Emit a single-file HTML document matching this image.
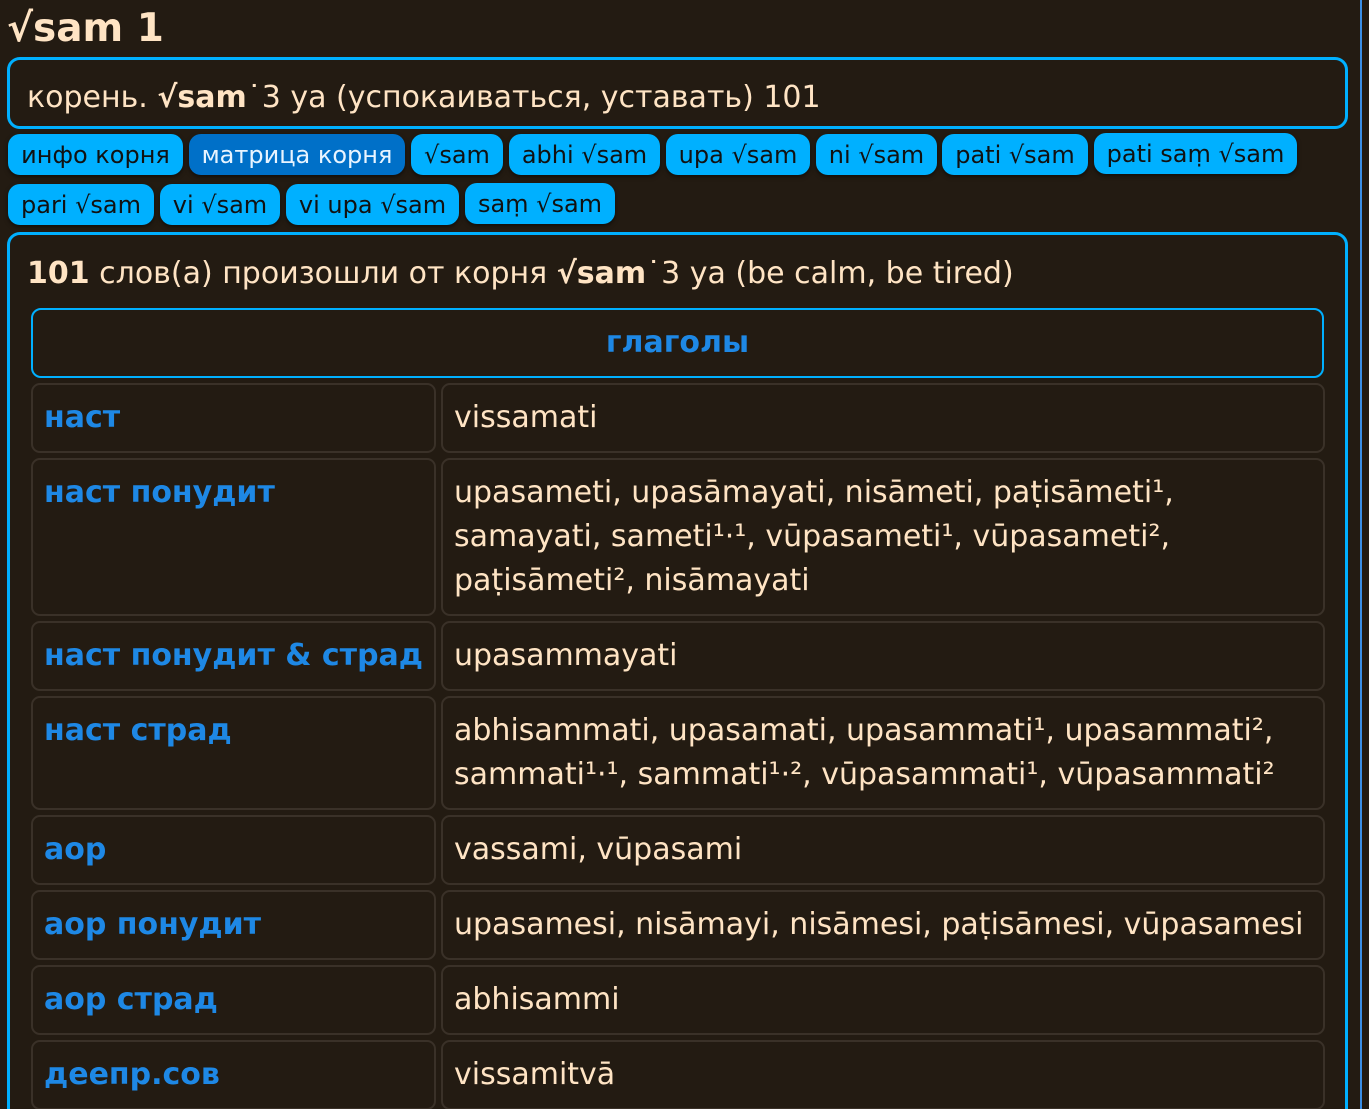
<!DOCTYPE html>
<html><head><meta charset="utf-8"><style>
html,body{margin:0;padding:0;background:#231b12;width:1369px;height:1109px;overflow:hidden}
body{font-family:"DejaVu Sans","Liberation Sans",sans-serif;color:#ffe4c4;position:relative}
h1{position:absolute;left:7px;top:4px;margin:0;font-size:39px;font-weight:bold;line-height:50px}
.box{position:absolute;left:7px;width:1335px;border:3px solid #00b0ff;border-radius:13px;box-sizing:content-box}
.b1{top:57px;height:66px}
.b1 .t{position:absolute;left:17px;top:16px;font-size:30px;line-height:44px;white-space:nowrap}
.btn{position:absolute;height:41px;background:#00b0ff;color:#111;border-radius:12px;font-size:24px;line-height:43px;text-align:center;white-space:nowrap;box-shadow:0 2px 4px rgba(0,0,0,.5)}
.act{background:#0070c8;color:#e8f4ff}
.b2{top:232px;height:900px}
.b2 .t{position:absolute;left:17px;top:17px;font-size:30px;line-height:44px;white-space:nowrap}
.hd{position:absolute;left:31px;top:308px;width:1289px;height:66px;border:2px solid #00b0ff;border-radius:10px;color:#1e88e5;font-weight:bold;font-size:30px;line-height:66px;text-align:center}
.c{position:absolute;border:2px solid #3a3128;border-radius:9px;box-sizing:border-box;padding:11px 11px;font-size:30px;line-height:44px}
.l{left:31px;width:405px;color:#1e88e5;font-weight:bold;white-space:nowrap}
.r{left:441px;width:884px}
.sb{position:absolute;left:1360px;top:0;width:2px;height:1109px;background:#3a8ee6}
</style></head><body>
<h1>√sam 1</h1>
<div class="box b1"><div class="t">корень. <b>√sam</b>˙3 ya (успокаиваться, уставать) 101</div></div>
<div class="btn" style="left:8px;top:134px;width:175px">инфо корня</div>
<div class="btn act" style="left:189px;top:134px;width:216px">матрица корня</div>
<div class="btn" style="left:411px;top:134px;width:92px">√sam</div>
<div class="btn" style="left:509px;top:134px;width:151px">abhi √sam</div>
<div class="btn" style="left:666px;top:134px;width:144px">upa √sam</div>
<div class="btn" style="left:816px;top:134px;width:121px">ni √sam</div>
<div class="btn" style="left:942px;top:134px;width:146px">pati √sam</div>
<div class="btn" style="left:1094px;top:133px;width:203px">pati saṃ √sam</div>
<div class="btn" style="left:8px;top:184px;width:146px">pari √sam</div>
<div class="btn" style="left:160px;top:184px;width:120px">vi √sam</div>
<div class="btn" style="left:286px;top:184px;width:173px">vi upa √sam</div>
<div class="btn" style="left:465px;top:183px;width:150px">saṃ √sam</div>
<div class="box b2"><div class="t"><b>101</b> слов(а) произошли от корня <b>√sam</b>˙3 ya (be calm, be tired)</div></div>
<div class="hd">глаголы</div>
<div class="c l" style="top:383px;height:70px">наст</div>
<div class="c r" style="top:383px;height:70px">vissamati</div>
<div class="c l" style="top:458px;height:158px">наст понудит</div>
<div class="c r" style="top:458px;height:158px">upasameti, upasāmayati, nisāmeti, paṭisāmeti¹,<br>samayati, sameti¹·¹, vūpasameti¹, vūpasameti²,<br>paṭisāmeti², nisāmayati</div>
<div class="c l" style="top:621px;height:70px">наст понудит &amp; страд</div>
<div class="c r" style="top:621px;height:70px">upasammayati</div>
<div class="c l" style="top:696px;height:114px">наст страд</div>
<div class="c r" style="top:696px;height:114px">abhisammati, upasamati, upasammati¹, upasammati²,<br>sammati¹·¹, sammati¹·², vūpasammati¹, vūpasammati²</div>
<div class="c l" style="top:815px;height:70px">аор</div>
<div class="c r" style="top:815px;height:70px">vassami, vūpasami</div>
<div class="c l" style="top:890px;height:70px">аор понудит</div>
<div class="c r" style="top:890px;height:70px;white-space:nowrap">upasamesi, nisāmayi, nisāmesi, paṭisāmesi, vūpasamesi</div>
<div class="c l" style="top:965px;height:70px">аор страд</div>
<div class="c r" style="top:965px;height:70px">abhisammi</div>
<div class="c l" style="top:1040px;height:70px">деепр.сов</div>
<div class="c r" style="top:1040px;height:70px">vissamitvā</div>
<div class="sb"></div>
</body></html>
